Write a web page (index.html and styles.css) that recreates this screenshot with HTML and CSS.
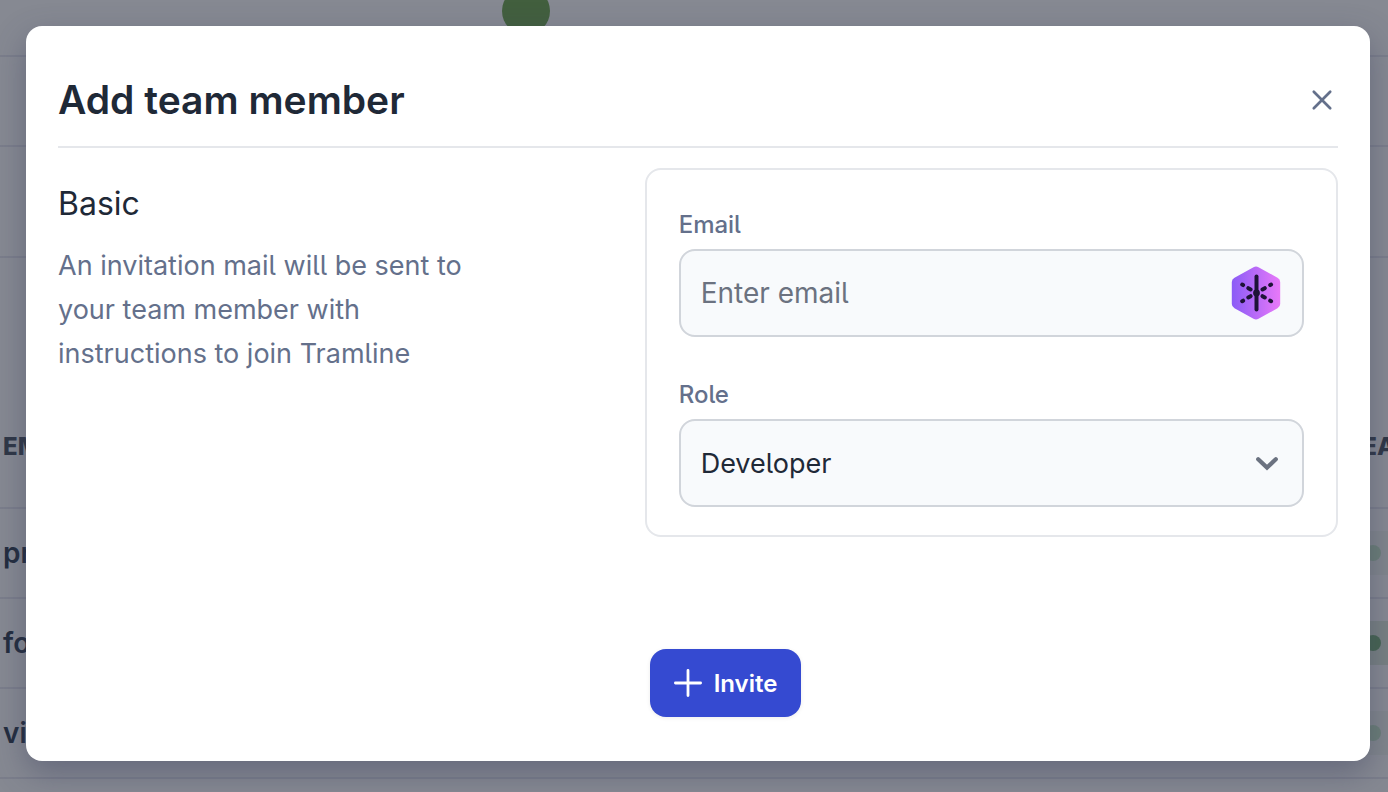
FILE: index.html
```html
<!DOCTYPE html>
<html lang="en">
<head>
<meta charset="utf-8">
<meta name="viewport" content="width=device-width, initial-scale=1">
<title>Add team member</title>
<link rel="stylesheet" href="styles.css">
</head>
<body>
<div class="page" aria-hidden="true">
  <div class="row row-top"><span class="avatar"></span></div>
  <div class="row"></div>
  <div class="row row-tabs"></div>
  <div class="row row-head"><span>EM</span><span>TEAM</span></div>
  <div class="row"><span>pr</span><span class="tag tag-faint"><i class="dot"></i></span></div>
  <div class="row"><span>fo</span><span class="tag"><i class="dot dot-strong"></i></span></div>
  <div class="row"><span>vi</span><span class="tag tag-faint"><i class="dot"></i></span></div>
</div>
<div class="overlay">
  <section class="dialog" role="dialog" aria-modal="true" aria-labelledby="dialog-title">
    <header class="dialog-header">
      <h1 class="dialog-title" id="dialog-title">Add team member</h1>
      <button class="close" type="button" aria-label="Close">
        <svg viewBox="0 0 32 32" width="32" height="32" fill="none" stroke="currentColor" stroke-width="2.7" stroke-linecap="round"><path d="M7.8 7.8 24.2 24.2M24.2 7.8 7.8 24.2"/></svg>
      </button>
    </header>
    <form class="form">
      <div class="intro">
        <h2 class="intro-title">Basic</h2>
        <p class="intro-text">An invitation mail will be sent to your team member with instructions to join Tramline</p>
      </div>
      <div class="card">
        <div class="field">
          <label class="label" for="email">Email</label>
          <div class="control-wrap">
            <input class="control" id="email" type="email" placeholder="Enter email">
            <svg class="control-icon badge" viewBox="0 0 50 56" width="50" height="56" aria-hidden="true">
              <defs><linearGradient id="hex" x1="0" x2="1" y1="0" y2="0"><stop offset="0" stop-color="#8b5cf6"/><stop offset="1" stop-color="#e879f9"/></linearGradient></defs>
              <path fill="url(#hex)" d="M22.5 2.2Q25 .8 27.5 2.2L46.5 12.7Q49.2 14.3 49.2 17V39Q49.2 41.7 46.5 43.3L27.5 53.8Q25 55.2 22.5 53.8L3.5 43.3Q.8 41.7 .8 39V17Q.8 14.3 3.5 12.7Z"/>
              <g fill="none" stroke="#1e1338" stroke-width="4" stroke-linecap="round"><path d="M25.5 11.5V44.5"/><path d="m11.200 19.600.9.500M17.300 23.200l2.300 1.300M31.500 31.200l2.300 1.300M39.200 35.700l.9.500M40.100 19.600l-.9.500M33.800 23.200l-2.300 1.300M19.600 31.200l-2.300 1.300M12.100 35.700l-.9.500"/></g>
              <circle cx="25.5" cy="28" r="3.4" fill="#1e1338"/>
            </svg>
          </div>
        </div>
        <div class="field">
          <label class="label" for="role">Role</label>
          <div class="control-wrap">
            <select class="control select" id="role"><option>Developer</option></select>
            <svg class="control-icon chevron" viewBox="0 0 24 16" width="24" height="16" aria-hidden="true"><path d="m3.200 4.200 8.800 8.400 8.800-8.400" fill="none" stroke="currentColor" stroke-width="4.2" stroke-linecap="round" stroke-linejoin="miter"/></svg>
          </div>
        </div>
      </div>
      <div class="actions">
        <button class="invite" type="submit">
          <svg viewBox="0 0 28 28" width="28" height="28" fill="none" stroke="currentColor" stroke-width="2.8" stroke-linecap="round" aria-hidden="true"><path d="M14 1.400V26.600M1.400 14H26.600"/></svg>
          <span>Invite</span>
        </button>
      </div>
    </form>
  </section>
</div>
</body>
</html>
```
FILE: styles.css
```css
* { box-sizing: border-box; }

body {
  margin: 0;
  min-height: 100vh;
  overflow: hidden;
  background: #fafafc;
  color: #1f2937;
  font-family: Inter, "Liberation Sans", sans-serif;
  font-feature-settings: "cv05";
}

h1, h2, p { margin: 0; }

/* Team list behind the dialog */
.page {
  position: absolute;
  inset: 0;
  overflow: hidden;
}

.row {
  display: flex;
  align-items: center;
  justify-content: space-between;
  height: 90px;
  padding-left: 3px;
  border-bottom: 2px solid #e4e4ee;
  color: #334155;
  font-size: 28px;
  font-weight: 600;
}

.row-top { height: 57px; padding-left: 502px; align-items: flex-start; }
.row-tabs { height: 111px; }
.row-head {
  height: 251px;
  padding-top: 128px;
  font-size: 24px;
  font-weight: 800;
  color: #4b5563;
  margin-right: -30px;
}

.avatar {
  width: 48px;
  height: 48px;
  margin-top: -13px;
  border-radius: 50%;
  background: #73a655;
}

.tag {
  display: flex;
  align-items: center;
  width: 48px;
  height: 44px;
  padding-left: 25px;
  background: #dfeadc;
}
.tag-faint { background: #f1f5f0; }
.dot { width: 16px; height: 16px; border-radius: 50%; background: #c4e4c6; }
.dot-strong { background: #79b179; }

.overlay {
  position: absolute;
  inset: 0;
  padding: 26px 18px 26px 26px;
  background: rgb(17 24 39 / 50%);
}

.dialog {
  padding: 44px 32px;
  border-radius: 16px;
  background: #fff;
  box-shadow: 0 12px 32px rgb(60 65 95 / 45%);
}

.dialog-header {
  display: flex;
  align-items: center;
  justify-content: space-between;
  padding-bottom: 16px;
  border-bottom: 2px solid #e5e7eb;
}

.dialog-title {
  font-size: 39px;
  line-height: 60px;
  font-weight: 600;
}

.close {
  display: flex;
  padding: 0;
  border: 0;
  background: none;
  color: #64708b;
}

.form {
  display: grid;
  grid-template-columns: 11fr 13fr;
  margin-top: 20px;
}

.intro { padding-top: 12px; }

.intro-title {
  font-size: 32px;
  line-height: 48px;
  font-weight: 400;
}

.intro-text {
  max-width: 440px;
  margin-top: 16px;
  color: #64708b;
  font-size: 27px;
  line-height: 44px;
}

.card {
  display: grid;
  gap: 40px;
  padding: 37px 32px 28px;
  border: 2px solid #e5e7eb;
  border-radius: 16px;
}

.field { display: grid; gap: 6px; }

.label {
  color: #64708b;
  font-size: 24px;
  line-height: 36px;
  font-weight: 500;
}

.control-wrap { position: relative; }

.control {
  display: block;
  width: 100%;
  height: 88px;
  padding: 0 20px;
  border: 2px solid #d1d5db;
  border-radius: 16px;
  background: #f8fafc;
  color: #1f2937;
  font: inherit;
  font-feature-settings: inherit;
  font-size: 28px;
  appearance: none;
}
.control::placeholder { color: #6b7280; opacity: 1; }
.select { font-size: 27px; }

.control-icon {
  position: absolute;
  top: 0;
  bottom: 0;
  margin: auto 0;
  pointer-events: none;
}
.badge { right: 23px; }
.chevron { right: 25px; color: #6b7280; }

.actions {
  grid-column: 2;
  margin: 112px 0 0 5px;
}

.invite {
  display: flex;
  align-items: center;
  gap: 12px;
  height: 68px;
  padding: 0 24px;
  border: 0;
  border-radius: 16px;
  background: #354ad1;
  box-shadow: 0 1px 4px rgb(0 0 0 / 8%);
  color: #fff;
  font: inherit;
  font-size: 24px;
  font-weight: 600;
}
```
